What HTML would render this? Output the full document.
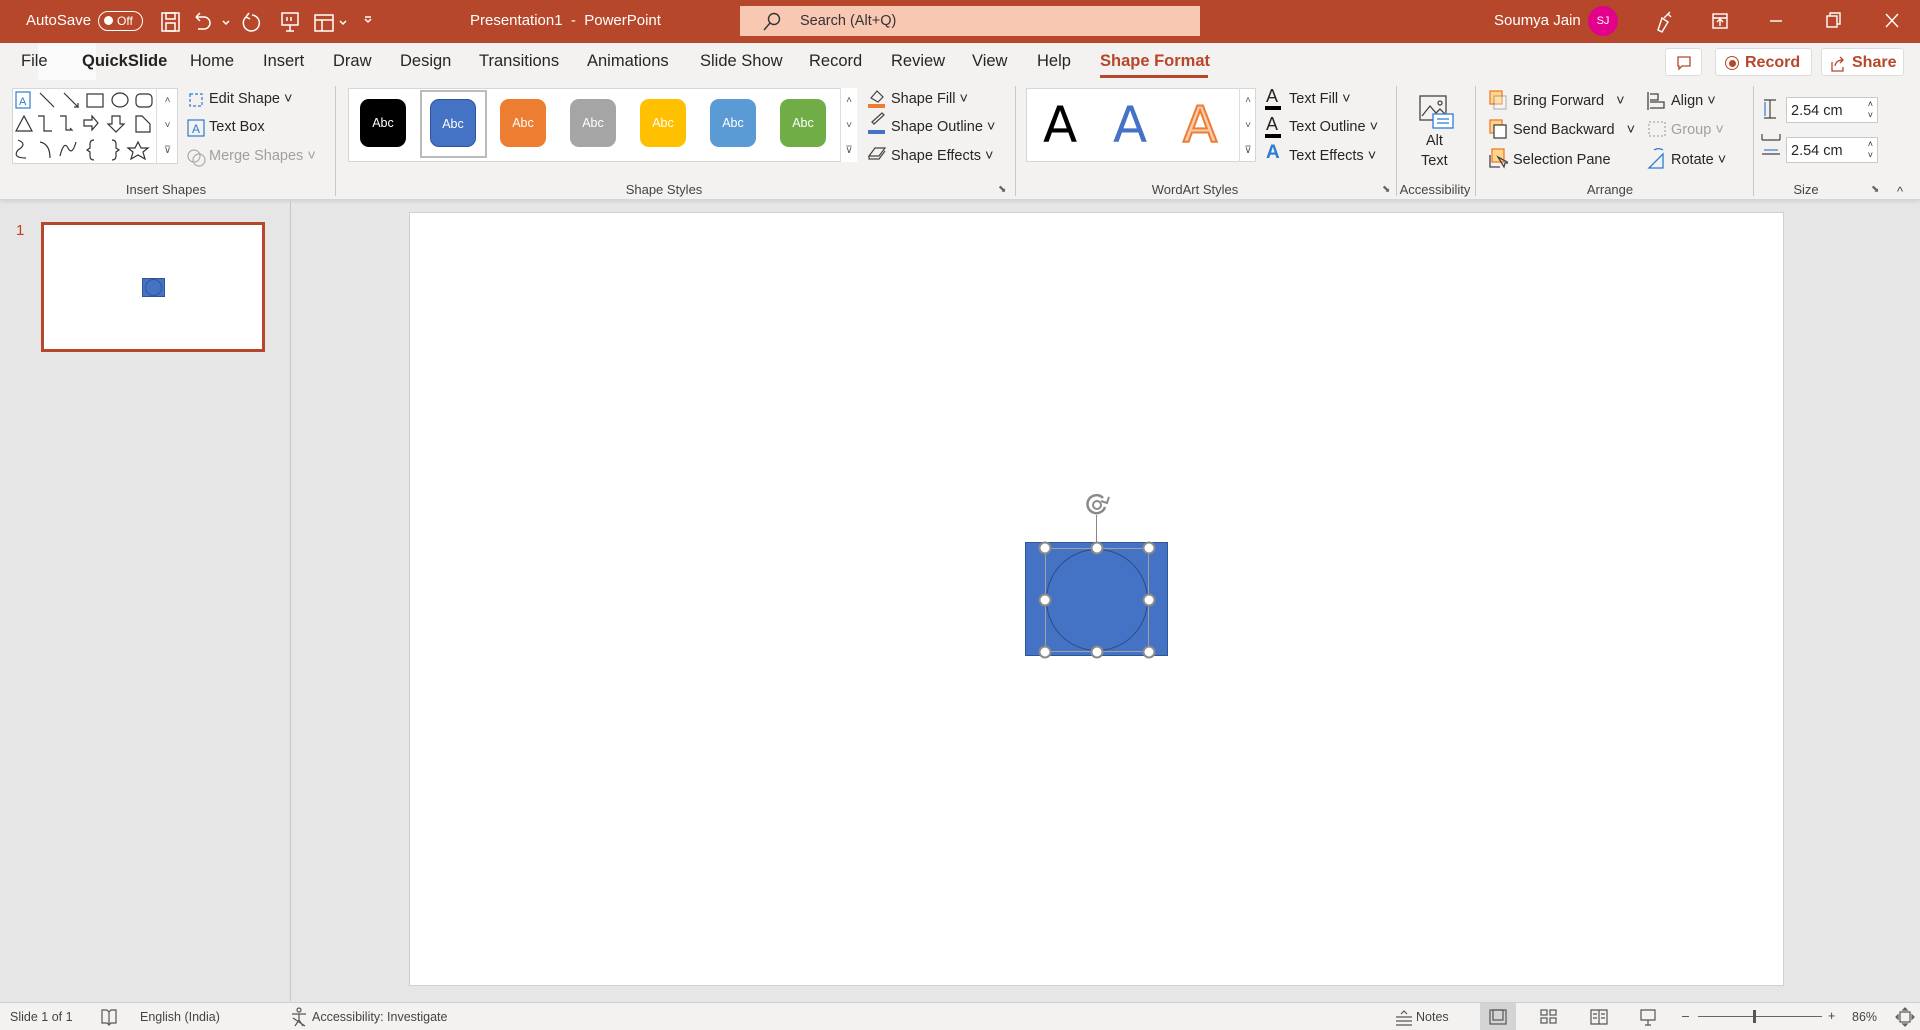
<!DOCTYPE html>
<html><head><meta charset="utf-8"><style>
*{margin:0;padding:0;box-sizing:border-box}
body{width:1920px;height:1030px;overflow:hidden;background:#e6e6e6;font-family:"Liberation Sans",sans-serif;color:#262626;position:relative}
.a{position:absolute;white-space:nowrap}
.tb{position:absolute;left:0;top:0;width:1920px;height:43px;background:#b7472a;color:#fff;font-size:15px}
.tabs{position:absolute;left:0;top:43px;width:1920px;height:37px;background:#f3f2f1;font-size:16.5px}
.rib{position:absolute;left:0;top:80px;width:1920px;height:120px;background:#f3f2f1;border-bottom:1px solid #d6d6d6;font-size:14.5px;box-shadow:0 2px 3px rgba(0,0,0,.08)}
.sep{position:absolute;top:6px;width:1px;height:110px;background:#c8c8c8}
.lbl{position:absolute;top:102px;font-size:13px;color:#444;transform:translateX(-50%)}
.sw{position:absolute;top:19px;width:46px;height:48px;border-radius:9px;color:#fff;font-size:12.5px;text-align:center;line-height:48px}
.sb{position:absolute;top:1002px;left:0;width:1920px;height:28px;background:#f3f2f1;border-top:1px solid #d0d0d0;font-size:12.5px;color:#444}
.h{position:absolute;width:13px;height:13px;border-radius:50%;background:#fff;border:2.5px solid #8a8a8a;transform:translate(-50%,-50%)}
.gray{color:#a0a0a0}
</style></head><body>
<div class="tb">
 <div class="a" style="left:26px;top:12px">AutoSave</div>
 <div class="a" style="left:98px;top:11px;width:45px;height:20px;border:1.5px solid #fff;border-radius:10px;font-size:12px"><span style="position:absolute;left:5px;top:4px;width:9px;height:9px;border-radius:50%;background:#fff"></span><span style="position:absolute;left:18px;top:2px">Off</span></div>
 <svg class="a" style="left:160px;top:9px" width="220" height="26" fill="none" stroke="#fff" stroke-width="1.5">
  <rect x="2" y="4" width="17" height="18"/><rect x="6" y="4" width="9" height="6"/><rect x="6" y="14" width="9" height="8"/>
  <path d="M36 8 h8 a6 6 0 0 1 0 12 h-6 M36 8 l4-4 M36 8 l4 4"/><path d="M63 12 l3 3 3-3"/>
  <path d="M86 8 a8 8 0 1 0 6 -2 M86 8 l3-4 M86 8 l4 2"/>
  <path d="M122 4 h16 v12 h-16z M130 16 v6 M126 22 h8 M127 8 v4 M131 8 v4"/>
  <path d="M155 6 h18 v16 h-18z M155 11 h18 M162 11 v11"/><path d="M180 12 l3 3 3-3"/>
  <path d="M205 10 l3 3 3-3 M205 8 h6"/>
 </svg>
 <div class="a" style="left:470px;top:12px">Presentation1 &nbsp;-&nbsp; PowerPoint</div>
 <div class="a" style="left:740px;top:6px;width:460px;height:30px;background:#f9c8b3;color:#333;font-size:14.5px">
  <svg class="a" style="left:22px;top:6px" width="20" height="20" fill="none" stroke="#333" stroke-width="1.4"><circle cx="12" cy="7" r="5.5"/><path d="M8 11 L2 18"/></svg>
  <span class="a" style="left:60px;top:7px">Search (Alt+Q)</span></div>
 <div class="a" style="left:1494px;top:12px">Soumya Jain</div>
 <div class="a" style="left:1588px;top:6px;width:30px;height:30px;border-radius:50%;background:#e3008c;font-size:11px;text-align:center;line-height:30px">SJ</div>
 <svg class="a" style="left:1650px;top:8px" width="260" height="28" fill="none" stroke="#fff" stroke-width="1.4">
  <path d="M8 22 l4-12 6 4 -6 10z M14 10 l6-6 M18 6 l3 3"/>
  <rect x="63" y="6" width="14" height="14"/><path d="M63 10 h14 M70 18 v-6 M67 14 l3-3 3 3"/>
  <path d="M120 13 h12"/>
  <rect x="177" y="8" width="10" height="11"/><path d="M180 8 v-3 h10 v11 h-3"/>
  <path d="M236 6 l12 13 M248 6 l-12 13"/>
 </svg>
</div>
<div class="tabs">
 <div class="a" style="left:38px;top:0;width:58px;height:37px;background:#fafafa"></div>
 <div class="a" style="left:21px;top:9px">File</div>
 <div class="a" style="left:82px;top:9px;font-weight:bold;color:#222">QuickSlide</div>
 <div class="a" style="left:190px;top:9px">Home</div>
 <div class="a" style="left:263px;top:9px">Insert</div>
 <div class="a" style="left:333px;top:9px">Draw</div>
 <div class="a" style="left:400px;top:9px">Design</div>
 <div class="a" style="left:479px;top:9px">Transitions</div>
 <div class="a" style="left:587px;top:9px">Animations</div>
 <div class="a" style="left:700px;top:9px">Slide Show</div>
 <div class="a" style="left:809px;top:9px">Record</div>
 <div class="a" style="left:891px;top:9px">Review</div>
 <div class="a" style="left:972px;top:9px">View</div>
 <div class="a" style="left:1037px;top:9px">Help</div>
 <div class="a" style="left:1100px;top:9px;color:#b7472a;font-weight:bold">Shape Format</div>
 <div class="a" style="left:1100px;top:32px;width:108px;height:3px;background:#b7472a"></div>
 <div class="a" style="left:1665px;top:5px;width:37px;height:28px;background:#fff;border:1px solid #ddd;border-radius:3px"><svg style="position:absolute;left:11px;top:7px" width="16" height="16" fill="none" stroke="#b7472a" stroke-width="1.3"><path d="M1 1h12v9H5l-3 3v-3H1z"/></svg></div>
 <div class="a" style="left:1715px;top:5px;width:97px;height:28px;background:#fff;border:1px solid #ddd;border-radius:3px;color:#b7472a;font-weight:bold;font-size:16px"><span style="position:absolute;left:9px;top:7px;width:14px;height:14px;border:1.5px solid #b7472a;border-radius:50%"></span><span style="position:absolute;left:12.5px;top:10.5px;width:7px;height:7px;background:#b7472a;border-radius:50%"></span><span class="a" style="left:29px;top:5px">Record</span></div>
 <div class="a" style="left:1821px;top:5px;width:83px;height:28px;background:#fff;border:1px solid #ddd;border-radius:3px;color:#b7472a;font-weight:bold;font-size:16px"><svg style="position:absolute;left:8px;top:7px" width="16" height="16" fill="none" stroke="#b7472a" stroke-width="1.3"><path d="M2 6v9h11v-4 M5 10 q1-6 8-6 M10 1l3 3-3 3"/></svg><span class="a" style="left:30px;top:5px">Share</span></div>
</div>
<div class="rib">
 <!-- Insert shapes -->
 <div class="a" style="left:12px;top:8px;width:166px;height:76px;background:#fff;border:1px solid #d6d6d6"></div>
 <svg class="a" style="left:14px;top:10px" width="150" height="72" fill="none" stroke="#333" stroke-width="1.2">
  <rect x="2" y="2" width="14" height="16" stroke="#2b7cd3"/><text x="5" y="15" font-size="11" fill="#2b7cd3" stroke="none" font-family="Liberation Sans">A</text>
  <path d="M26 3 l14 14 M50 3 l14 14 l-4 0 M64 17 v-4"/><rect x="73" y="4" width="16" height="13"/><ellipse cx="106" cy="10" rx="8" ry="7"/><rect x="122" y="4" width="16" height="13" rx="4"/>
  <path d="M2 41 l8-15 8 15z M24 26 h6 v15 h8 M46 26 h6 v14 h6 l-2-2 M70 30 h8 v-4 l6 7 -6 7 v-4 h-8z M98 26 h8 v8 h4 l-8 8 -8-8 h4z M122 26 h6 l8 8 v8 h-14z"/>
  <path d="M4 50 q10 4 0 10 q-6 8 8 8 M26 52 q10 2 10 16 M46 66 q4-16 8-8 q4 8 8-6 M80 50 q-4 0-4 4 v4 l-3 2 3 2 v4 q0 4 4 4 M98 50 q4 0 4 4v4l3 2-3 2v4q0 4-4 4 M124 52 l3 6 7 0 -5 4 2 7 -7-4 -7 4 2-7 -5-4 7 0z"/>
 </svg>
 <div class="a" style="left:156px;top:8px;width:22px;height:76px;border-left:1px solid #ddd;font-size:10px;color:#555;text-align:center;line-height:25px">˄<br>˅<br>⊽</div>
 <svg class="a" style="left:186px;top:10px" width="20" height="80" fill="none" stroke="#2b7cd3" stroke-width="1.2"><path d="M4 4h12v12H4z" stroke-dasharray="3 2"/><rect x="2" y="30" width="16" height="16"/><text x="6" y="43" font-size="12" fill="#2b7cd3" stroke="none" font-family="Liberation Sans">A</text><circle cx="8" cy="66" r="6" stroke="#aaa"/><circle cx="13" cy="70" r="6" stroke="#aaa"/></svg>
 <div class="a" style="left:209px;top:11px">Edit Shape ˅</div>
 <div class="a" style="left:209px;top:39px">Text Box</div>
 <div class="a gray" style="left:209px;top:68px">Merge Shapes ˅</div>
 <div class="lbl" style="left:166px">Insert Shapes</div>
 <div class="sep" style="left:335px"></div>
 <!-- shape styles -->
 <div class="a" style="left:348px;top:8px;width:509px;height:74px;background:#fff;border:1px solid #d6d6d6"></div>
 <div class="a" style="left:420px;top:10px;width:67px;height:68px;border:2px solid #bbb;background:#fff"></div>
 <div class="sw" style="left:360px;background:#000">Abc</div>
 <div class="sw" style="left:430px;background:#4472c4;border:1px solid #2f5597">Abc</div>
 <div class="sw" style="left:500px;background:#ed7d31">Abc</div>
 <div class="sw" style="left:570px;background:#a5a5a5">Abc</div>
 <div class="sw" style="left:640px;background:#ffc000">Abc</div>
 <div class="sw" style="left:710px;background:#5b9bd5">Abc</div>
 <div class="sw" style="left:780px;background:#70ad47">Abc</div>
 <div class="a" style="left:840px;top:8px;width:17px;height:74px;border-left:1px solid #ddd;font-size:10px;color:#555;text-align:center;line-height:25px;background:#fff">˄<br>˅<br>⊽</div>
 <svg class="a" style="left:866px;top:8px" width="22" height="84" fill="none" stroke="#444" stroke-width="1.2"><path d="M5 10 l6-7 6 6 -5 5z"/><rect x="2" y="16" width="17" height="4" fill="#ed7d31" stroke="none"/><path d="M6 34 l10-9 2 2 -10 9z"/><rect x="2" y="42" width="17" height="4" fill="#4472c4" stroke="none"/><path d="M3 68 l6-8 h10 l-6 8z M3 68 v3 h10 l6-8"/></svg>
 <div class="a" style="left:891px;top:11px">Shape Fill ˅</div>
 <div class="a" style="left:891px;top:39px">Shape Outline ˅</div>
 <div class="a" style="left:891px;top:68px">Shape Effects ˅</div>
 <div class="lbl" style="left:664px">Shape Styles</div>
 <div class="a" style="left:998px;top:104px;font-size:10px;color:#666">⬊</div>
 <div class="sep" style="left:1015px"></div>
 <!-- wordart -->
 <div class="a" style="left:1026px;top:8px;width:230px;height:74px;background:#fff;border:1px solid #d6d6d6"></div>
 <div class="a" style="left:1043px;top:16px;font-size:50px;color:#000;font-family:'DejaVu Sans',sans-serif">A</div>
 <div class="a" style="left:1113px;top:16px;font-size:50px;color:#4472c4;font-family:'DejaVu Sans',sans-serif">A</div>
 <div class="a" style="left:1183px;top:16px;font-size:50px;color:#f8cbad;-webkit-text-stroke:2px #ed7d31;font-family:'DejaVu Sans',sans-serif">A</div>
 <div class="a" style="left:1239px;top:8px;width:17px;height:74px;border-left:1px solid #ddd;font-size:10px;color:#555;text-align:center;line-height:25px">˄<br>˅<br>⊽</div>
 <div class="a" style="left:1266px;top:6px;font-size:18px">A</div><div class="a" style="left:1265px;top:26px;width:16px;height:4px;background:#000"></div>
 <div class="a" style="left:1266px;top:34px;font-size:18px">A</div><div class="a" style="left:1265px;top:54px;width:16px;height:4px;background:#000"></div>
 <div class="a" style="left:1266px;top:62px;font-size:19px;color:#2b7cd3;font-weight:bold">A</div>
 <div class="a" style="left:1289px;top:11px">Text Fill ˅</div>
 <div class="a" style="left:1289px;top:39px">Text Outline ˅</div>
 <div class="a" style="left:1289px;top:68px">Text Effects ˅</div>
 <div class="lbl" style="left:1195px">WordArt Styles</div>
 <div class="a" style="left:1382px;top:104px;font-size:10px;color:#666">⬊</div>
 <div class="sep" style="left:1396px"></div>
 <svg class="a" style="left:1418px;top:14px" width="40" height="40" fill="none" stroke="#444" stroke-width="1.3"><rect x="2" y="2" width="26" height="24"/><path d="M4 22 l8-10 6 7 4-4 6 6"/><circle cx="22" cy="9" r="2"/><rect x="15" y="20" width="20" height="14" fill="#fff" stroke="#2b7cd3"/><path d="M19 25h12 M19 29h12" stroke="#2b7cd3"/></svg>
 <div class="a" style="left:1426px;top:53px">Alt</div>
 <div class="a" style="left:1421px;top:73px">Text</div>
 <div class="lbl" style="left:1435px">Accessibility</div>
 <div class="sep" style="left:1475px"></div>
 <svg class="a" style="left:1488px;top:9px" width="20" height="90" fill="none" stroke-width="1.3"><rect x="2" y="2" width="12" height="13" fill="#ffd58a" stroke="#ed7d31"/><rect x="6" y="7" width="12" height="13" fill="#fff" stroke="#444" opacity=".3"/><rect x="2" y="31" width="12" height="13" fill="#ffd58a" stroke="#ed7d31"/><rect x="6" y="36" width="12" height="13" fill="#fff" stroke="#444"/><rect x="4" y="60" width="12" height="13" fill="#ffd58a" stroke="#ed7d31"/><path d="M2 66 v12 h10 M10 68 l6 10 1-4 4 0z" stroke="#444"/></svg>
 <div class="a" style="left:1513px;top:13px">Bring Forward &nbsp; ˅</div>
 <div class="a" style="left:1513px;top:42px">Send Backward &nbsp; ˅</div>
 <div class="a" style="left:1513px;top:72px">Selection Pane</div>
 <svg class="a" style="left:1646px;top:10px" width="22" height="86" fill="none" stroke="#444" stroke-width="1.3"><path d="M2 2v18 M4 4h8v6H4 M4 12h14v6H4"/><path d="M3 32h16v14H3z" stroke="#aaa" stroke-dasharray="2 2"/><path d="M3 78 l14-14 v14z M8 60 a8 8 0 0 1 9 0" stroke="#2b7cd3"/></svg>
 <div class="a" style="left:1671px;top:13px">Align ˅</div>
 <div class="a gray" style="left:1671px;top:42px">Group ˅</div>
 <div class="a" style="left:1671px;top:72px">Rotate ˅</div>
 <div class="lbl" style="left:1610px">Arrange</div>
 <div class="sep" style="left:1753px"></div>
 <svg class="a" style="left:1760px;top:18px" width="24" height="64" fill="none" stroke="#444" stroke-width="1.2"><path d="M10 2v18 M4 2h12 M4 20h12"/><path d="M5 4v14" stroke="#2b7cd3"/><path d="M2 42h18 M2 42v-6 M20 42v-6 M2 56h18" /><path d="M4 52h14" stroke="#2b7cd3"/></svg>
 <div class="a" style="left:1786px;top:17px;width:92px;height:26px;background:#fff;border:1px solid #c8c8c8;padding:5px 4px">2.54 cm<span style="position:absolute;right:4px;top:1px;font-size:9px;line-height:11px">˄<br>˅</span></div>
 <div class="a" style="left:1786px;top:57px;width:92px;height:26px;background:#fff;border:1px solid #c8c8c8;padding:5px 4px">2.54 cm<span style="position:absolute;right:4px;top:1px;font-size:9px;line-height:11px">˄<br>˅</span></div>
 <div class="lbl" style="left:1806px">Size</div>
 <div class="a" style="left:1871px;top:104px;font-size:10px;color:#666">⬊</div>
 <div class="a" style="left:1897px;top:104px;font-size:13px;color:#444">^</div>
</div>
<!-- left panel -->
<div class="a" style="left:290px;top:201px;width:1px;height:800px;background:#c6c6c6"></div>
<div class="a" style="left:16px;top:222px;color:#c43e1c;font-size:15px">1</div>
<div class="a" style="left:41px;top:222px;width:224px;height:130px;border:3px solid #b7472a;background:#fff"></div>
<div class="a" style="left:142px;top:278px;width:23px;height:19px;background:#4472c4;border:1px solid #2f5597"><div style="position:absolute;left:2px;top:0;width:17px;height:17px;border-radius:50%;border:1px solid #2f5597"></div></div>
<!-- slide -->
<div class="a" style="left:409px;top:212px;width:1375px;height:774px;background:#fff;border:1px solid #d0d0d0"></div>
<div class="a" style="left:1025px;top:542px;width:143px;height:114px;background:#4472c4;border:1px solid #2f5597"></div>
<div class="a" style="left:1046px;top:549px;width:102px;height:102px;border-radius:50%;border:1px solid #2f4a80"></div>
<div class="a" style="left:1045px;top:548px;width:104px;height:104px;border:1px solid #a0a0a0"></div>
<div class="a" style="left:1096px;top:515px;width:1px;height:33px;background:#888"></div>
<svg class="a" style="left:1083px;top:491px" width="30" height="28" fill="none" stroke="#8a8a8a" stroke-width="2.5"><path d="M22 16 a9 9 0 1 1 -2-9"/><path d="M18 10 l6 2 2-6" stroke-width="2"/><circle cx="14" cy="14" r="4" stroke-width="2"/></svg>
<div class="h" style="left:1045px;top:548px"></div><div class="h" style="left:1097px;top:548px"></div><div class="h" style="left:1149px;top:548px"></div>
<div class="h" style="left:1045px;top:600px"></div><div class="h" style="left:1149px;top:600px"></div>
<div class="h" style="left:1045px;top:652px"></div><div class="h" style="left:1097px;top:652px"></div><div class="h" style="left:1149px;top:652px"></div>
<!-- status -->
<div class="sb">
 <div class="a" style="left:10px;top:7px">Slide 1 of 1</div>
 <svg class="a" style="left:100px;top:5px" width="18" height="18" fill="none" stroke="#555" stroke-width="1.2"><path d="M2 2h5l2 2 2-2h5v13h-5l-2 2-2-2H2z M9 4v13"/></svg>
 <div class="a" style="left:140px;top:7px">English (India)</div>
 <svg class="a" style="left:290px;top:4px" width="18" height="20" fill="none" stroke="#555" stroke-width="1.2"><circle cx="9" cy="3" r="2"/><path d="M2 7h14 M9 7v6 l-4 6 M9 13l4 6 M3 11 l12 8"/></svg>
 <div class="a" style="left:312px;top:7px">Accessibility: Investigate</div>
 <svg class="a" style="left:1394px;top:6px" width="20" height="18" fill="none" stroke="#555" stroke-width="1.2"><path d="M2 8h16 M2 12h16 M2 16h16 M7 5l3-3 3 3"/></svg>
 <div class="a" style="left:1416px;top:7px">Notes</div>
 <div class="a" style="left:1480px;top:0;width:36px;height:27px;background:#d4d4d4"></div>
 <svg class="a" style="left:1488px;top:5px" width="190" height="18" fill="none" stroke="#555" stroke-width="1.2"><rect x="2" y="2" width="16" height="14"/><rect x="5" y="2" width="10" height="10"/><rect x="53" y="2" width="6" height="5"/><rect x="62" y="2" width="6" height="5"/><rect x="53" y="10" width="6" height="5"/><rect x="62" y="10" width="6" height="5"/><path d="M103 2h16v14h-16z M111 2v14 M105 6h4 M113 6h4 M105 10h4 M113 10h4"/><path d="M153 2h14v10h-14z M160 12v5 M157 17h6"/></svg>
 <div class="a" style="left:1682px;top:6px">–</div>
 <div class="a" style="left:1698px;top:13px;width:124px;height:1px;background:#666"></div>
 <div class="a" style="left:1753px;top:7px;width:3px;height:13px;background:#555"></div>
 <div class="a" style="left:1828px;top:6px">+</div>
 <div class="a" style="left:1852px;top:7px">86%</div>
 <svg class="a" style="left:1895px;top:4px" width="20" height="20" fill="none" stroke="#555" stroke-width="1.2"><rect x="5" y="5" width="10" height="10"/><path d="M10 1l-2 2h4z M10 19l-2-2h4z M1 10l2-2v4z M19 10l-2-2v4z"/></svg>
</div>
</body></html>
